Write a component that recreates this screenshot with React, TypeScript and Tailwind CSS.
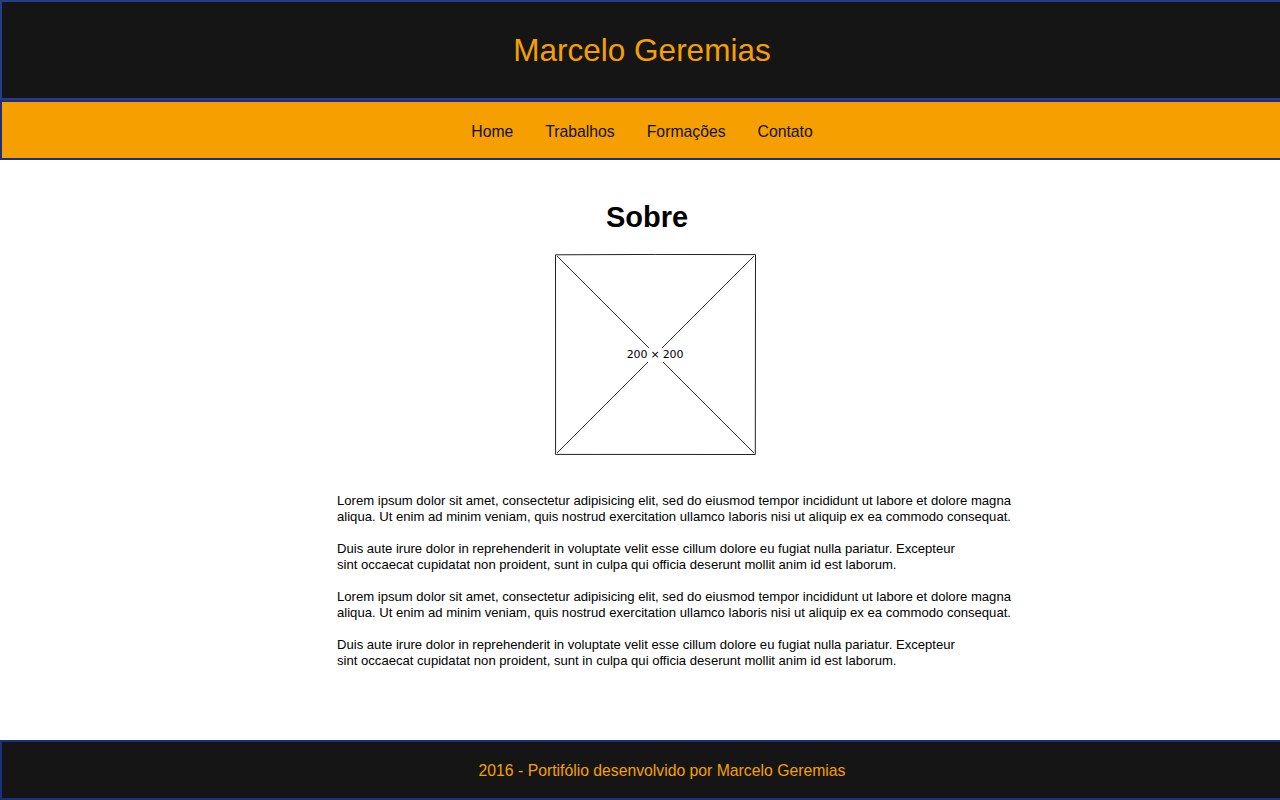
import React from 'react';

const navItems = ['Home', 'Trabalhos', 'Formações', 'Contato'];

const lorem1 = [
  'Lorem ipsum dolor sit amet, consectetur adipisicing elit, sed do eiusmod tempor incididunt ut labore et dolore magna',
  'aliqua. Ut enim ad minim veniam, quis nostrud exercitation ullamco laboris nisi ut aliquip ex ea commodo consequat.',
];

const lorem2 = [
  'Duis aute irure dolor in reprehenderit in voluptate velit esse cillum dolore eu fugiat nulla pariatur. Excepteur',
  'sint occaecat cupidatat non proident, sunt in culpa qui officia deserunt mollit anim id est laborum.',
];

function Placeholder() {
  return (
    <div className="relative w-[201px] h-[201px]">
      <svg width="201" height="201" viewBox="0 0 201 201" className="block">
        <path d="M0.5 0.8 Q100 0.2 200.5 0.6 L200.3 200.5 L0.6 200.4 Z" fill="white" stroke="#222" strokeWidth="1" />
        <line x1="2" y1="2" x2="199" y2="199" stroke="#333" strokeWidth="1" />
        <line x1="199" y1="2" x2="2" y2="199" stroke="#333" strokeWidth="1" />
      </svg>
      <span className="absolute left-1/2 top-[94px] -translate-x-1/2 bg-white px-[1px] text-[11px] leading-[14px] text-black whitespace-nowrap font-['DejaVu_Sans',sans-serif] tracking-[-0.2px]">
        200 × 200
      </span>
    </div>
  );
}

export default function App() {
  return (
    <div className="w-full overflow-hidden bg-white font-['Liberation_Sans',Arial,sans-serif]">
      <header className="w-[calc(100%+4px)] h-[100px] border-2 border-[#263d8c] bg-[#151515] flex items-center justify-center">
        <h1 className="pt-[2px] text-[31.5px] leading-none text-[#f5a000] font-normal">Marcelo Geremias</h1>
      </header>

      <nav className="w-[calc(100%+4px)] h-[60px] border-2 border-[#1b2f7c] bg-[#f59f00] flex items-center justify-center">
        <ul className="flex gap-8 text-[15.75px] text-[#111] pt-[4px]">
          {navItems.map((item) => (
            <li key={item}>{item}</li>
          ))}
        </ul>
      </nav>

      <main className="h-[580px] flex flex-col items-center">
        <h2 className="mt-[41px] pl-[14px] text-[29px] leading-[33px] font-bold text-black">Sobre</h2>
        <div className="mt-[20px] ml-[30px]">
          <Placeholder />
        </div>
        <div className="w-[760px] pl-[77px] mt-[38px] text-[13.1px] leading-[16px] text-black whitespace-nowrap">
          {[lorem1, lorem2, lorem1, lorem2].map((p, i) => (
            <p key={i} className="mb-[16px]">
              {p[0]}
              <br />
              {p[1]}
            </p>
          ))}
        </div>
      </main>

      <footer className="w-[calc(100%+4px)] h-[60px] border-2 border-[#1b2f7c] bg-[#151515] flex items-center justify-center">
        <p className="pl-[40px] pt-[2px] text-[15.75px] text-[#f5a000]">2016 - Portifólio desenvolvido por Marcelo Geremias</p>
      </footer>
    </div>
  );
}
